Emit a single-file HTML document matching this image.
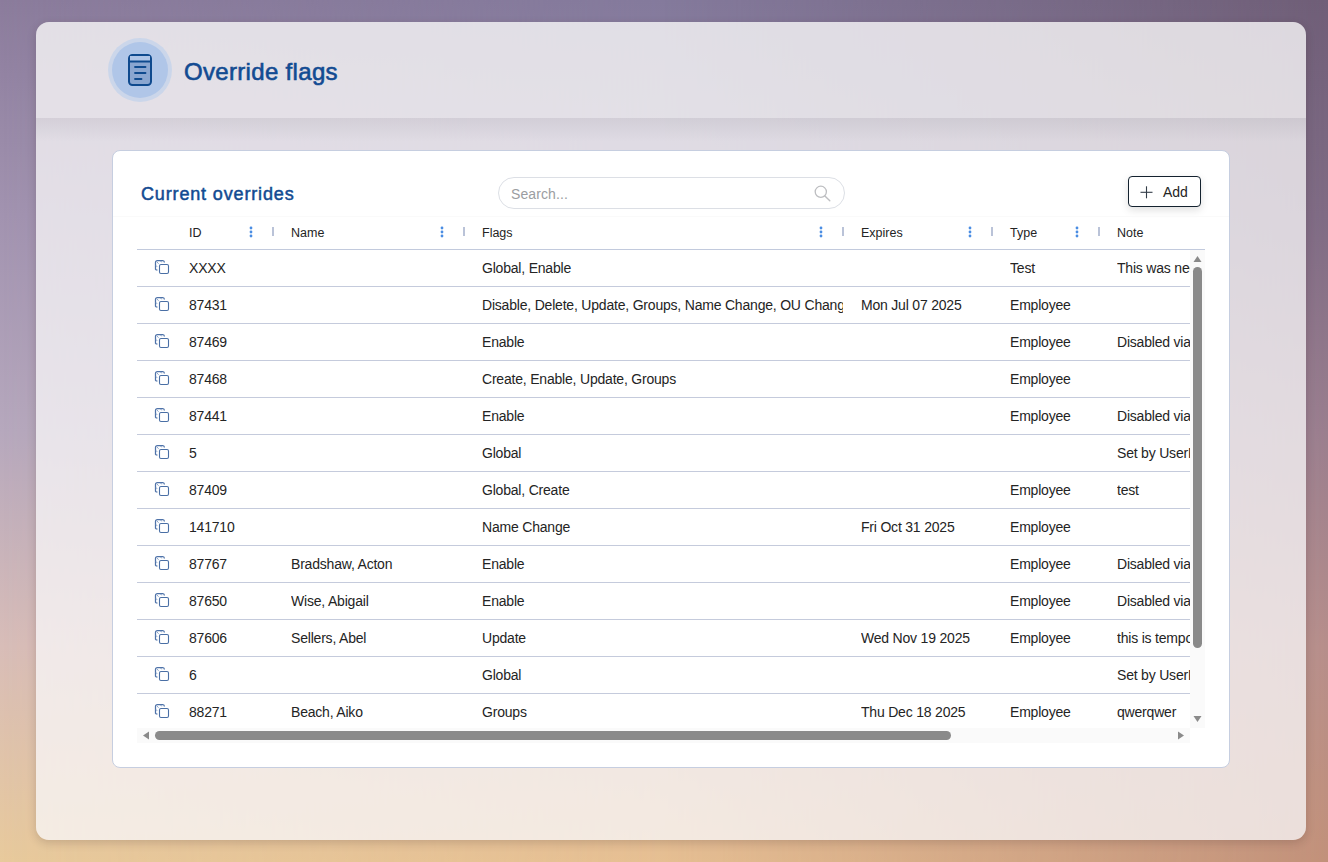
<!DOCTYPE html>
<html>
<head>
<meta charset="utf-8">
<style>
html,body{margin:0;padding:0;width:1328px;height:862px;overflow:hidden;}
body{position:relative;font-family:"Liberation Sans",sans-serif;color:#242424;
  background:linear-gradient(to bottom,#8b7c9c 0%,#a293b0 25%,#b6a8bd 50%,#d8bdb8 75%,#e8ca9c 100%);}
.bgm,.bgr{position:absolute;left:0;top:0;width:1328px;height:862px;}
.bgm{background:linear-gradient(to bottom,#847a9c 0%,#9487a6 25%,#ab99ac 50%,#cdaca3 75%,#e6bf92 100%);
  -webkit-mask-image:linear-gradient(to right,transparent 0%,#000 50%,#000 100%);}
.bgr{background:linear-gradient(to bottom,#6f5e77 0%,#7f6b84 25%,#9a7e8e 50%,#b68e8b 75%,#c2917a 100%);
  -webkit-mask-image:linear-gradient(to right,transparent 50%,#000 100%);}
.panel{position:absolute;left:36px;top:22px;width:1270px;height:818px;border-radius:13px;overflow:hidden;
  background:rgba(248,247,249,0.76);box-shadow:0 3px 10px rgba(50,30,30,0.18);}
.hdr{position:absolute;left:0;top:0;width:1270px;height:96px;background:rgba(240,240,242,0.22);}
.hshadow{position:absolute;left:0;top:96px;width:1270px;height:24px;
  background:linear-gradient(to bottom,rgba(50,50,60,0.075),rgba(50,50,60,0));}
.ring{position:absolute;left:108px;top:38px;width:64px;height:64px;border-radius:50%;background:#cbd6ea;}
.circ{position:absolute;left:112px;top:42px;width:56px;height:56px;border-radius:50%;background:#b0c6e8;}
.title{position:absolute;left:184px;top:57px;font-size:24px;color:#124b92;-webkit-text-stroke:0.6px #124b92;letter-spacing:0.32px;line-height:30px;white-space:nowrap;}
.card{position:absolute;left:112px;top:150px;width:1116px;height:616px;border:1px solid #c6cee0;border-radius:8px;background:#fff;}
.ctitle{position:absolute;left:141px;top:183px;font-size:18px;color:#124b92;-webkit-text-stroke:0.5px #124b92;letter-spacing:0.85px;line-height:22px;white-space:nowrap;}
.search{position:absolute;left:498px;top:177px;width:345px;height:30px;border:1px solid #dcdfe5;border-radius:16px;background:#fff;}
.search span{position:absolute;left:12px;top:8px;font-size:14px;color:#9b9da1;letter-spacing:0.1px;}
.addbtn{position:absolute;left:1128px;top:176px;width:71px;height:29px;border:1px solid #14222f;border-radius:4px;background:#fff;box-shadow:0 3px 8px rgba(0,0,0,0.13);}
.addbtn span{position:absolute;left:34px;top:7px;font-size:14px;color:#242424;}
.th{position:absolute;top:226px;font-size:12.5px;color:#242424;line-height:15px;white-space:nowrap;}
.dots{position:absolute;top:226px;width:4px;height:12px;}
.sep{position:absolute;top:227px;width:2px;height:9px;background:#bac3d8;}
.hline{position:absolute;left:137px;top:249px;width:1068px;height:1px;background:#c2cadd;}
.rows{position:absolute;left:137px;top:250px;width:1053px;height:478px;overflow:hidden;}
.row{position:absolute;left:0;width:1053px;height:36px;border-bottom:1px solid #c5cbdc;}
.c{position:absolute;top:10px;font-size:14px;letter-spacing:-0.2px;line-height:17px;white-space:nowrap;overflow:hidden;color:#242424;}
.vs{position:absolute;left:1190px;top:250px;width:15px;height:478px;background:#fafafa;}
.hs{position:absolute;left:137px;top:728px;width:1053px;height:15px;background:#fafafa;}
.thumb{position:absolute;background:#8a8a8a;border-radius:5px;}
</style>
</head>
<body>
<div class="bgm"></div><div class="bgr"></div>
<div class="panel"><div class="hdr"></div><div class="hshadow"></div></div>
<div class="ring"></div><div class="circ"></div>
<svg style="position:absolute;left:126px;top:52px" width="28" height="36" viewBox="0 0 28 36">
  <rect x="3" y="3" width="22" height="30" rx="3.5" fill="#8aa6d0" stroke="#0f4a8e" stroke-width="2"/>
  <rect x="4" y="4" width="20" height="5" fill="#afc5e7"/>
  <line x1="3" y1="9.5" x2="25" y2="9.5" stroke="#0f4a8e" stroke-width="2"/>
  <line x1="9" y1="15" x2="19.5" y2="15" stroke="#0f4a8e" stroke-width="1.8" stroke-linecap="round"/>
  <line x1="9" y1="21" x2="19.5" y2="21" stroke="#0f4a8e" stroke-width="1.8" stroke-linecap="round"/>
  <line x1="9" y1="27" x2="15.5" y2="27" stroke="#0f4a8e" stroke-width="1.8" stroke-linecap="round"/>
</svg>
<div class="title">Override flags</div>
<div class="card"></div>
<div class="ctitle">Current overrides</div>
<div class="search"><span>Search...</span>
<svg style="position:absolute;left:315px;top:7px" width="17" height="17" viewBox="0 0 17 17"><circle cx="6.8" cy="6.8" r="5.6" fill="none" stroke="#bdbec1" stroke-width="1.3"/><line x1="10.9" y1="10.9" x2="15.8" y2="15.8" stroke="#bdbec1" stroke-width="1.4" stroke-linecap="round"/></svg>
</div>
<div class="addbtn"><svg style="position:absolute;left:11px;top:9px" width="13" height="13" viewBox="0 0 13 13"><line x1="6.5" y1="0.3" x2="6.5" y2="12.3" stroke="#333d48" stroke-width="1.1"/><line x1="0.5" y1="6.3" x2="12.5" y2="6.3" stroke="#333d48" stroke-width="1.1"/></svg><span>Add</span></div>

<!-- table header -->
<div class="th" style="left:189px">ID</div>
<div class="th" style="left:291px">Name</div>
<div class="th" style="left:482px">Flags</div>
<div class="th" style="left:861px">Expires</div>
<div class="th" style="left:1010px">Type</div>
<div class="th" style="left:1117px">Note</div>
<svg class="dots" style="left:249px" width="4" height="12" viewBox="0 0 4 12"><circle cx="2" cy="2" r="1.4" fill="#4a8de3"/><circle cx="2" cy="6" r="1.4" fill="#4a8de3"/><circle cx="2" cy="10" r="1.4" fill="#4a8de3"/></svg>
<svg class="dots" style="left:440px" width="4" height="12" viewBox="0 0 4 12"><circle cx="2" cy="2" r="1.4" fill="#4a8de3"/><circle cx="2" cy="6" r="1.4" fill="#4a8de3"/><circle cx="2" cy="10" r="1.4" fill="#4a8de3"/></svg>
<svg class="dots" style="left:819px" width="4" height="12" viewBox="0 0 4 12"><circle cx="2" cy="2" r="1.4" fill="#4a8de3"/><circle cx="2" cy="6" r="1.4" fill="#4a8de3"/><circle cx="2" cy="10" r="1.4" fill="#4a8de3"/></svg>
<svg class="dots" style="left:968px" width="4" height="12" viewBox="0 0 4 12"><circle cx="2" cy="2" r="1.4" fill="#4a8de3"/><circle cx="2" cy="6" r="1.4" fill="#4a8de3"/><circle cx="2" cy="10" r="1.4" fill="#4a8de3"/></svg>
<svg class="dots" style="left:1075px" width="4" height="12" viewBox="0 0 4 12"><circle cx="2" cy="2" r="1.4" fill="#4a8de3"/><circle cx="2" cy="6" r="1.4" fill="#4a8de3"/><circle cx="2" cy="10" r="1.4" fill="#4a8de3"/></svg>
<div class="sep" style="left:272px"></div>
<div class="sep" style="left:463px"></div>
<div class="sep" style="left:842px"></div>
<div class="sep" style="left:991px"></div>
<div class="sep" style="left:1098px"></div>
<div class="hline"></div>
<div style="position:absolute;left:113px;top:216px;width:1116px;height:1px;background:#fafafa"></div>

<div class="rows">
<div class="row" style="top:0px"><svg style="position:absolute;left:17px;top:9px" width="16" height="17" viewBox="0 0 16 17"><rect x="5.5" y="5.5" width="9" height="9" rx="1.5" fill="none" stroke="#4a6fa5" stroke-width="1.1"/><path d="M1.5 10.6 V3.5 Q1.5 1.5 3.5 1.5 H8.8 Q10.4 1.5 10.4 3.4 M1.6 10.6 Q1.6 11 3.4 11.2" fill="none" stroke="#4f73a9" stroke-width="1.25"/><path d="M3 3.2 L4.6 4.6 M6.6 1.9 L7.6 3.3 M1.9 6.4 L3.1 7.8" stroke="#7191bf" stroke-width="0.9"/></svg><div class="c" style="left:52px;width:80px">XXXX</div><div class="c" style="left:345px;width:361px">Global, Enable</div><div class="c" style="left:873px;width:95px">Test</div><div class="c" style="left:980px;width:200px">This was needed for testing</div></div>
<div class="row" style="top:37px"><svg style="position:absolute;left:17px;top:9px" width="16" height="17" viewBox="0 0 16 17"><rect x="5.5" y="5.5" width="9" height="9" rx="1.5" fill="none" stroke="#4a6fa5" stroke-width="1.1"/><path d="M1.5 10.6 V3.5 Q1.5 1.5 3.5 1.5 H8.8 Q10.4 1.5 10.4 3.4 M1.6 10.6 Q1.6 11 3.4 11.2" fill="none" stroke="#4f73a9" stroke-width="1.25"/><path d="M3 3.2 L4.6 4.6 M6.6 1.9 L7.6 3.3 M1.9 6.4 L3.1 7.8" stroke="#7191bf" stroke-width="0.9"/></svg><div class="c" style="left:52px;width:80px">87431</div><div class="c" style="left:345px;width:361px">Disable, Delete, Update, Groups, Name Change, OU Chang</div><div class="c" style="left:724px;width:130px">Mon Jul 07 2025</div><div class="c" style="left:873px;width:95px">Employee</div></div>
<div class="row" style="top:74px"><svg style="position:absolute;left:17px;top:9px" width="16" height="17" viewBox="0 0 16 17"><rect x="5.5" y="5.5" width="9" height="9" rx="1.5" fill="none" stroke="#4a6fa5" stroke-width="1.1"/><path d="M1.5 10.6 V3.5 Q1.5 1.5 3.5 1.5 H8.8 Q10.4 1.5 10.4 3.4 M1.6 10.6 Q1.6 11 3.4 11.2" fill="none" stroke="#4f73a9" stroke-width="1.25"/><path d="M3 3.2 L4.6 4.6 M6.6 1.9 L7.6 3.3 M1.9 6.4 L3.1 7.8" stroke="#7191bf" stroke-width="0.9"/></svg><div class="c" style="left:52px;width:80px">87469</div><div class="c" style="left:345px;width:361px">Enable</div><div class="c" style="left:873px;width:95px">Employee</div><div class="c" style="left:980px;width:200px">Disabled via script</div></div>
<div class="row" style="top:111px"><svg style="position:absolute;left:17px;top:9px" width="16" height="17" viewBox="0 0 16 17"><rect x="5.5" y="5.5" width="9" height="9" rx="1.5" fill="none" stroke="#4a6fa5" stroke-width="1.1"/><path d="M1.5 10.6 V3.5 Q1.5 1.5 3.5 1.5 H8.8 Q10.4 1.5 10.4 3.4 M1.6 10.6 Q1.6 11 3.4 11.2" fill="none" stroke="#4f73a9" stroke-width="1.25"/><path d="M3 3.2 L4.6 4.6 M6.6 1.9 L7.6 3.3 M1.9 6.4 L3.1 7.8" stroke="#7191bf" stroke-width="0.9"/></svg><div class="c" style="left:52px;width:80px">87468</div><div class="c" style="left:345px;width:361px">Create, Enable, Update, Groups</div><div class="c" style="left:873px;width:95px">Employee</div></div>
<div class="row" style="top:148px"><svg style="position:absolute;left:17px;top:9px" width="16" height="17" viewBox="0 0 16 17"><rect x="5.5" y="5.5" width="9" height="9" rx="1.5" fill="none" stroke="#4a6fa5" stroke-width="1.1"/><path d="M1.5 10.6 V3.5 Q1.5 1.5 3.5 1.5 H8.8 Q10.4 1.5 10.4 3.4 M1.6 10.6 Q1.6 11 3.4 11.2" fill="none" stroke="#4f73a9" stroke-width="1.25"/><path d="M3 3.2 L4.6 4.6 M6.6 1.9 L7.6 3.3 M1.9 6.4 L3.1 7.8" stroke="#7191bf" stroke-width="0.9"/></svg><div class="c" style="left:52px;width:80px">87441</div><div class="c" style="left:345px;width:361px">Enable</div><div class="c" style="left:873px;width:95px">Employee</div><div class="c" style="left:980px;width:200px">Disabled via script</div></div>
<div class="row" style="top:185px"><svg style="position:absolute;left:17px;top:9px" width="16" height="17" viewBox="0 0 16 17"><rect x="5.5" y="5.5" width="9" height="9" rx="1.5" fill="none" stroke="#4a6fa5" stroke-width="1.1"/><path d="M1.5 10.6 V3.5 Q1.5 1.5 3.5 1.5 H8.8 Q10.4 1.5 10.4 3.4 M1.6 10.6 Q1.6 11 3.4 11.2" fill="none" stroke="#4f73a9" stroke-width="1.25"/><path d="M3 3.2 L4.6 4.6 M6.6 1.9 L7.6 3.3 M1.9 6.4 L3.1 7.8" stroke="#7191bf" stroke-width="0.9"/></svg><div class="c" style="left:52px;width:80px">5</div><div class="c" style="left:345px;width:361px">Global</div><div class="c" style="left:980px;width:200px">Set by UserFlags</div></div>
<div class="row" style="top:222px"><svg style="position:absolute;left:17px;top:9px" width="16" height="17" viewBox="0 0 16 17"><rect x="5.5" y="5.5" width="9" height="9" rx="1.5" fill="none" stroke="#4a6fa5" stroke-width="1.1"/><path d="M1.5 10.6 V3.5 Q1.5 1.5 3.5 1.5 H8.8 Q10.4 1.5 10.4 3.4 M1.6 10.6 Q1.6 11 3.4 11.2" fill="none" stroke="#4f73a9" stroke-width="1.25"/><path d="M3 3.2 L4.6 4.6 M6.6 1.9 L7.6 3.3 M1.9 6.4 L3.1 7.8" stroke="#7191bf" stroke-width="0.9"/></svg><div class="c" style="left:52px;width:80px">87409</div><div class="c" style="left:345px;width:361px">Global, Create</div><div class="c" style="left:873px;width:95px">Employee</div><div class="c" style="left:980px;width:200px">test</div></div>
<div class="row" style="top:259px"><svg style="position:absolute;left:17px;top:9px" width="16" height="17" viewBox="0 0 16 17"><rect x="5.5" y="5.5" width="9" height="9" rx="1.5" fill="none" stroke="#4a6fa5" stroke-width="1.1"/><path d="M1.5 10.6 V3.5 Q1.5 1.5 3.5 1.5 H8.8 Q10.4 1.5 10.4 3.4 M1.6 10.6 Q1.6 11 3.4 11.2" fill="none" stroke="#4f73a9" stroke-width="1.25"/><path d="M3 3.2 L4.6 4.6 M6.6 1.9 L7.6 3.3 M1.9 6.4 L3.1 7.8" stroke="#7191bf" stroke-width="0.9"/></svg><div class="c" style="left:52px;width:80px">141710</div><div class="c" style="left:345px;width:361px">Name Change</div><div class="c" style="left:724px;width:130px">Fri Oct 31 2025</div><div class="c" style="left:873px;width:95px">Employee</div></div>
<div class="row" style="top:296px"><svg style="position:absolute;left:17px;top:9px" width="16" height="17" viewBox="0 0 16 17"><rect x="5.5" y="5.5" width="9" height="9" rx="1.5" fill="none" stroke="#4a6fa5" stroke-width="1.1"/><path d="M1.5 10.6 V3.5 Q1.5 1.5 3.5 1.5 H8.8 Q10.4 1.5 10.4 3.4 M1.6 10.6 Q1.6 11 3.4 11.2" fill="none" stroke="#4f73a9" stroke-width="1.25"/><path d="M3 3.2 L4.6 4.6 M6.6 1.9 L7.6 3.3 M1.9 6.4 L3.1 7.8" stroke="#7191bf" stroke-width="0.9"/></svg><div class="c" style="left:52px;width:80px">87767</div><div class="c" style="left:154px;width:170px">Bradshaw, Acton</div><div class="c" style="left:345px;width:361px">Enable</div><div class="c" style="left:873px;width:95px">Employee</div><div class="c" style="left:980px;width:200px">Disabled via script</div></div>
<div class="row" style="top:333px"><svg style="position:absolute;left:17px;top:9px" width="16" height="17" viewBox="0 0 16 17"><rect x="5.5" y="5.5" width="9" height="9" rx="1.5" fill="none" stroke="#4a6fa5" stroke-width="1.1"/><path d="M1.5 10.6 V3.5 Q1.5 1.5 3.5 1.5 H8.8 Q10.4 1.5 10.4 3.4 M1.6 10.6 Q1.6 11 3.4 11.2" fill="none" stroke="#4f73a9" stroke-width="1.25"/><path d="M3 3.2 L4.6 4.6 M6.6 1.9 L7.6 3.3 M1.9 6.4 L3.1 7.8" stroke="#7191bf" stroke-width="0.9"/></svg><div class="c" style="left:52px;width:80px">87650</div><div class="c" style="left:154px;width:170px">Wise, Abigail</div><div class="c" style="left:345px;width:361px">Enable</div><div class="c" style="left:873px;width:95px">Employee</div><div class="c" style="left:980px;width:200px">Disabled via script</div></div>
<div class="row" style="top:370px"><svg style="position:absolute;left:17px;top:9px" width="16" height="17" viewBox="0 0 16 17"><rect x="5.5" y="5.5" width="9" height="9" rx="1.5" fill="none" stroke="#4a6fa5" stroke-width="1.1"/><path d="M1.5 10.6 V3.5 Q1.5 1.5 3.5 1.5 H8.8 Q10.4 1.5 10.4 3.4 M1.6 10.6 Q1.6 11 3.4 11.2" fill="none" stroke="#4f73a9" stroke-width="1.25"/><path d="M3 3.2 L4.6 4.6 M6.6 1.9 L7.6 3.3 M1.9 6.4 L3.1 7.8" stroke="#7191bf" stroke-width="0.9"/></svg><div class="c" style="left:52px;width:80px">87606</div><div class="c" style="left:154px;width:170px">Sellers, Abel</div><div class="c" style="left:345px;width:361px">Update</div><div class="c" style="left:724px;width:130px">Wed Nov 19 2025</div><div class="c" style="left:873px;width:95px">Employee</div><div class="c" style="left:980px;width:200px">this is temporary</div></div>
<div class="row" style="top:407px"><svg style="position:absolute;left:17px;top:9px" width="16" height="17" viewBox="0 0 16 17"><rect x="5.5" y="5.5" width="9" height="9" rx="1.5" fill="none" stroke="#4a6fa5" stroke-width="1.1"/><path d="M1.5 10.6 V3.5 Q1.5 1.5 3.5 1.5 H8.8 Q10.4 1.5 10.4 3.4 M1.6 10.6 Q1.6 11 3.4 11.2" fill="none" stroke="#4f73a9" stroke-width="1.25"/><path d="M3 3.2 L4.6 4.6 M6.6 1.9 L7.6 3.3 M1.9 6.4 L3.1 7.8" stroke="#7191bf" stroke-width="0.9"/></svg><div class="c" style="left:52px;width:80px">6</div><div class="c" style="left:345px;width:361px">Global</div><div class="c" style="left:980px;width:200px">Set by UserFlags</div></div>
<div class="row" style="top:444px"><svg style="position:absolute;left:17px;top:9px" width="16" height="17" viewBox="0 0 16 17"><rect x="5.5" y="5.5" width="9" height="9" rx="1.5" fill="none" stroke="#4a6fa5" stroke-width="1.1"/><path d="M1.5 10.6 V3.5 Q1.5 1.5 3.5 1.5 H8.8 Q10.4 1.5 10.4 3.4 M1.6 10.6 Q1.6 11 3.4 11.2" fill="none" stroke="#4f73a9" stroke-width="1.25"/><path d="M3 3.2 L4.6 4.6 M6.6 1.9 L7.6 3.3 M1.9 6.4 L3.1 7.8" stroke="#7191bf" stroke-width="0.9"/></svg><div class="c" style="left:52px;width:80px">88271</div><div class="c" style="left:154px;width:170px">Beach, Aiko</div><div class="c" style="left:345px;width:361px">Groups</div><div class="c" style="left:724px;width:130px">Thu Dec 18 2025</div><div class="c" style="left:873px;width:95px">Employee</div><div class="c" style="left:980px;width:200px">qwerqwer</div></div>
</div>
<div class="vs">
 <svg style="position:absolute;left:3px;top:5px" width="9" height="8"><polygon points="0.5,7 4.5,1 8.5,7" fill="#8a8a8a"/></svg>
 <div class="thumb" style="left:3px;top:17px;width:9px;height:381px"></div>
 <svg style="position:absolute;left:3px;top:465px" width="9" height="8"><polygon points="0.5,1 4.5,7 8.5,1" fill="#8a8a8a"/></svg>
</div>
<div class="hs">
 <svg style="position:absolute;left:5px;top:3px" width="8" height="9"><polygon points="7,0.5 1,4.5 7,8.5" fill="#8a8a8a"/></svg>
 <div class="thumb" style="left:18px;top:3px;width:796px;height:9px"></div>
 <svg style="position:absolute;left:1040px;top:3px" width="8" height="9"><polygon points="1,0.5 7,4.5 1,8.5" fill="#8a8a8a"/></svg>
</div>
</body>
</html>
